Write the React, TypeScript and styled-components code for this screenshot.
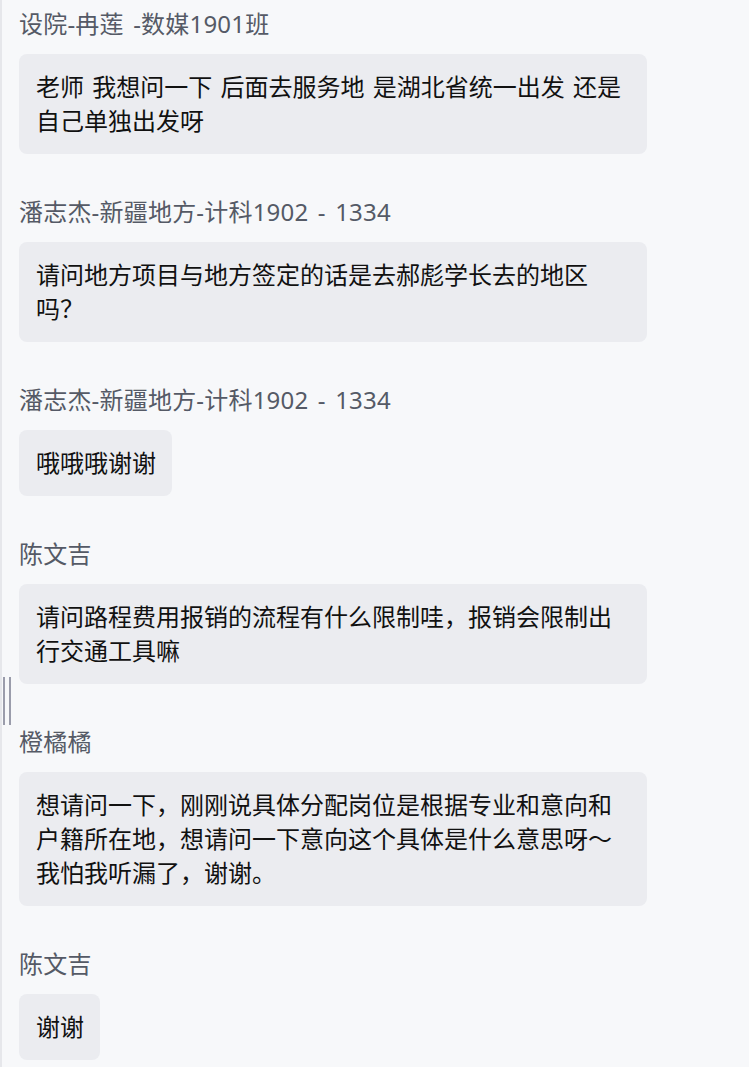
import styled, { createGlobalStyle } from 'styled-components';

type Message = {
   name: string
   text: string
}

const messages: Message[] = [
   { name: '设院-冉莲 -数媒1901班', text: '老师 我想问一下 后面去服务地 是湖北省统一出发 还是自己单独出发呀' },
   { name: '潘志杰-新疆地方-计科1902 - 1334', text: '请问地方项目与地方签定的话是去郝彪学长去的地区吗？' },
   { name: '潘志杰-新疆地方-计科1902 - 1334', text: '哦哦哦谢谢' },
   { name: '陈文吉', text: '请问路程费用报销的流程有什么限制哇，报销会限制出行交通工具嘛' },
   { name: '橙橘橘', text: '想请问一下，刚刚说具体分配岗位是根据专业和意向和户籍所在地，想请问一下意向这个具体是什么意思呀～我怕我听漏了，谢谢。' },
   { name: '陈文吉', text: '谢谢' },
];

const GlobalStyle = createGlobalStyle`
  html, body {
    margin: 0;
    padding: 0;
    background: #f7f8fa;
  }
`;

const App = () => {
   return (
      <>
         <GlobalStyle />
         <Panel>
            <ResizeGrip>
               <GripLine />
               <GripLine />
            </ResizeGrip>
            <List>
               {messages.map((m, i) => (
                  <Item key={i}>
                     <Sender>{m.name}</Sender>
                     <Bubble>{m.text}</Bubble>
                  </Item>
               ))}
            </List>
         </Panel>
      </>
   );
}

const Panel = styled.div`
  position: relative;
  min-height: 100vh;
  box-sizing: border-box;
  border-left: 2px solid #e6e7eb;
  background: #f7f8fa;
  padding: 7px 0 0 17px;
  font-family: "Noto Sans", "Noto Sans CJK SC", sans-serif;
`;

const ResizeGrip = styled.div`
  position: absolute;
  left: 1px;
  top: 677px;
  height: 48px;
  display: flex;
  gap: 4px;
`;

const GripLine = styled.div`
  width: 2px;
  height: 100%;
  background: #9a9cab;
`;

const List = styled.div`
  display: flex;
  flex-direction: column;
  gap: 41px;
`;

const Item = styled.div`
  display: flex;
  flex-direction: column;
  align-items: flex-start;
  gap: 13px;
`;

const Sender = styled.div`
  font-size: 24px;
  line-height: 34px;
  word-spacing: 3px;
  letter-spacing: 0.2px;
  color: #555a66;
  white-space: nowrap;
`;

const Bubble = styled.div`
  box-sizing: border-box;
  max-width: 628px;
  padding: 16px 16px 16px 17px;
  border-radius: 8px;
  background: #ebecf0;
  color: #111111;
  font-size: 24px;
  line-height: 34px;
  word-spacing: 2px;
  word-break: break-all;
`;

export default App;
